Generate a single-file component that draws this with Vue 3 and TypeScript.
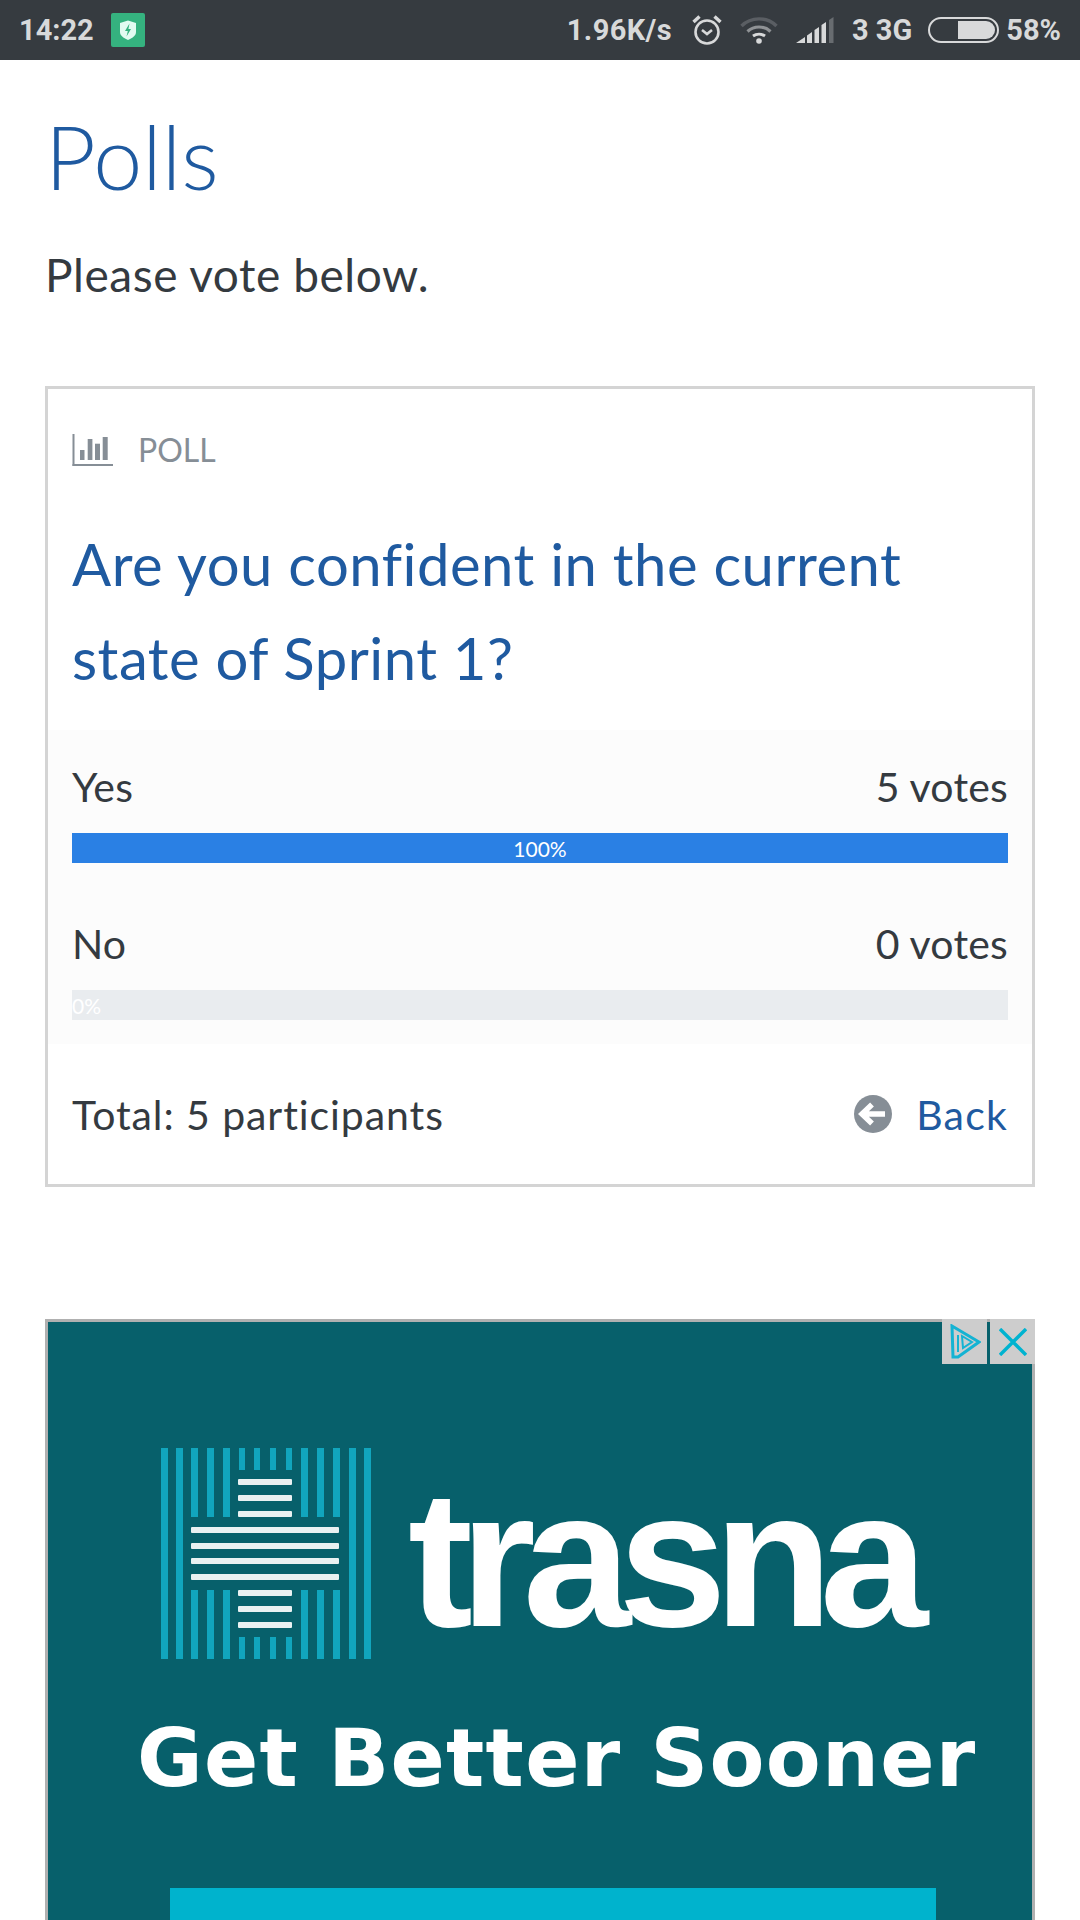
<script setup lang="ts">
interface Option {
  label: string
  votes: number
  percent: number
}

interface Stripe {
  x: number
  y: number
  w: number
  h: number
}

const options: Option[] = [
  { label: 'Yes', votes: 5, percent: 100 },
  { label: 'No', votes: 0, percent: 0 },
]

// logo stripes, coordinates are relative to the 211x211 logo box
const outerBars = [0, 15, 188, 203]
const sideBars = [30, 46, 62, 140, 156, 172]
const middleBars = [78, 93, 109, 125]

const blue: Stripe[] = [
  ...outerBars.map((x) => ({ x, y: 0, w: 7, h: 211 })),
  ...sideBars.flatMap((x) => [
    { x, y: 0, w: 7, h: 69 },
    { x, y: 142, w: 7, h: 69 },
  ]),
  ...middleBars.flatMap((x) => [
    { x, y: 0, w: 6, h: 22 },
    { x, y: 189, w: 6, h: 22 },
  ]),
]

const white: Stripe[] = [
  ...[31, 47, 63, 142, 158, 174].map((y) => ({ x: 77, y, w: 54, h: 6 })),
  ...[79, 95, 110, 126].map((y) => ({ x: 30, y, w: 148, h: 6 })),
]
</script>

<template>
  <div class="screen">
    <div class="status-bar">
      <div class="status-left">
        <span>14:22</span>
        <span class="shield-badge">
          <svg width="18" height="20" viewBox="0 0 18 20">
            <path d="M1 3 L9 0.5 L17 3 V12 C17 16 13 18 9 20 C5 18 1 16 1 12 Z" fill="#e2fbf1" />
            <path d="M10.5 3.5 L6 11 H8.8 L7.5 16.5 L12 9 H9.4 Z" fill="#35b27f" />
          </svg>
        </span>
      </div>
      <div class="status-right">
        <span class="speed">1.96K/s</span>
        <svg class="alarm" width="32" height="32" viewBox="0 0 32 32" fill="none" stroke="#d8d9da" stroke-width="2.6">
          <circle cx="16" cy="18" r="11.5" />
          <path d="M11 16 L16 20 L21 16" />
          <path d="M2.5 8 L8.5 2.5 M29.5 8 L23.5 2.5" stroke-width="3.4" />
        </svg>
        <svg class="wifi" width="38" height="28" viewBox="0 0 38 28" fill="none">
          <path d="M1.5 10 C11 0.5 27 0.5 36.5 10" stroke="#5a5e63" stroke-width="3.4" />
          <path d="M7.5 15.5 C14 9.5 24 9.5 30.5 15.5" stroke="#8f9295" stroke-width="3.2" />
          <path d="M13 20 C16.5 17.5 21.5 17.5 25 20" stroke="#d8d9da" stroke-width="3" />
          <circle cx="19" cy="25" r="2.8" fill="#d8d9da" />
        </svg>
        <svg class="signal" width="38" height="26" viewBox="0 0 38 26">
          <path d="M0 26 L9 20 V26 Z M11 18.5 L16 15 V26 H11 Z M18.5 13 V26 H23 V10 Z M25.5 8 V26 H30 V5 Z" fill="#d8d9da" />
          <path d="M33 3 L37.5 0 V26 H33 Z" fill="#686c70" />
        </svg>
        <span class="network">3 3G</span>
        <span class="battery"><span class="battery-level"></span></span>
        <span>58%</span>
      </div>
    </div>

    <main class="content">
      <h1>Polls</h1>
      <p class="subtitle">Please vote below.</p>

      <section class="poll-card">
        <div class="poll-head">
          <svg width="41" height="32" viewBox="0 0 41 32" fill="#868e96">
            <rect x="0.5" y="0" width="2" height="32" />
            <rect x="0.5" y="30" width="40.5" height="2" />
            <rect x="8" y="16" width="4.5" height="10" />
            <rect x="15.7" y="5" width="4.7" height="21" />
            <rect x="23" y="9.7" width="5" height="16.3" />
            <rect x="30.7" y="3" width="5" height="23" />
          </svg>
          <span>POLL</span>
        </div>
        <h2>Are you confident in the current state of Sprint 1?</h2>

        <div class="results">
          <div v-for="option in options" :key="option.label" class="result">
            <div class="result-row">
              <span>{{ option.label }}</span>
              <span>{{ option.votes }} votes</span>
            </div>
            <div class="bar">
              <div class="bar-fill" :style="{ width: option.percent + '%' }">{{ option.percent }}%</div>
            </div>
          </div>
        </div>

        <div class="poll-foot">
          <span class="total">Total: 5 participants</span>
          <a class="back">
            <svg width="38" height="38" viewBox="0 0 38 38">
              <circle cx="19" cy="19" r="19" fill="#868e96" />
              <path d="M8 19 H31 M18 9.5 L8 19 L18 28.5" fill="none" stroke="#fff" stroke-width="5.5" />
            </svg>
            <span class="back-label">Back</span>
          </a>
        </div>
      </section>

      <section class="ad">
        <div class="ad-controls">
          <span class="ad-button">
            <svg width="32" height="36" viewBox="0 0 32 36" fill="none" stroke="#14b3d3" stroke-width="3">
              <path d="M3 2 L30 18 L9 33 L4 33 Z" />
              <path d="M13 12 L23 18 L14 24 Z" stroke-width="2" />
              <path d="M9 11 V28" stroke-width="2" />
            </svg>
          </span>
          <span class="ad-button">
            <svg width="28" height="28" viewBox="0 0 28 28" stroke="#00b3d0" stroke-width="3.4">
              <path d="M1 1 L27 27 M27 1 L1 27" />
            </svg>
          </span>
        </div>

        <div class="ad-brand">
          <svg class="ad-logo" width="211" height="211" viewBox="0 0 211 211">
            <rect v-for="(s, i) in blue" :key="'b' + i" :x="s.x" :y="s.y" :width="s.w" :height="s.h" fill="#11a5bd" />
            <rect v-for="(s, i) in white" :key="'w' + i" :x="s.x" :y="s.y" :width="s.w" :height="s.h" rx="1" fill="#e9f1f2" />
          </svg>
          <span class="ad-name">trasna</span>
        </div>
        <div class="ad-tagline">Get Better Sooner</div>
        <div class="ad-cta"></div>
      </section>
    </main>
  </div>
</template>

<style>
body {
  margin: 0;
  background: #fff;
}
</style>

<style scoped>
.screen {
  width: 1080px;
  height: 1920px;
  overflow: hidden;
  background: #fff;
  font-family: Lato, "Noto Sans", sans-serif;
  color: #343a40;
}

.status-bar {
  height: 60px;
  box-sizing: border-box;
  padding: 0 19px;
  display: flex;
  align-items: center;
  justify-content: space-between;
  background: #363b40;
  color: #d8d9da;
  font-family: Roboto, sans-serif;
  font-size: 29px;
  font-weight: 700;
}

.status-left {
  display: flex;
  align-items: center;
  gap: 17px;
}

.shield-badge {
  width: 34px;
  height: 34px;
  border-radius: 2px;
  background: #35b27f;
  display: flex;
  align-items: center;
  justify-content: center;
}

.status-right {
  display: flex;
  align-items: center;
}

.speed {
  letter-spacing: 0.4px;
}

.alarm {
  margin-left: 19px;
}

.wifi {
  margin-left: 17px;
}

.signal {
  margin-left: 18px;
}

.network {
  margin-left: 18px;
}

.battery {
  width: 71px;
  height: 26px;
  box-sizing: border-box;
  margin-left: 16px;
  margin-right: 7px;
  padding: 2px;
  border: 2px solid #d8d9da;
  border-radius: 13px;
  display: flex;
  justify-content: flex-end;
}

.battery-level {
  width: 37px;
  background: #d8d9da;
  border-radius: 0 10px 10px 0;
}

.content {
  padding: 36px 45px 0;
}

h1 {
  margin: 0;
  font-size: 88px;
  line-height: 120px;
  font-weight: 300;
  color: #1f5aa0;
}

.subtitle {
  margin: 29px 0 0;
  font-size: 46px;
  line-height: 60px;
  letter-spacing: 0.55px;
}

.poll-card {
  margin-top: 81px;
  border: 3px solid #d4d4d4;
}

.poll-head {
  padding: 41px 24px 0;
  height: 40px;
  display: flex;
  align-items: center;
  gap: 25px;
  font-size: 32px;
  line-height: 40px;
  color: #868e96;
}

h2 {
  margin: 47px 0 0;
  padding: 0 24px;
  font-size: 58px;
  line-height: 94px;
  font-weight: 400;
  letter-spacing: 0.5px;
  color: #1f5aa0;
}

.results {
  margin-top: 25px;
  padding: 32px 24px 24px;
  background: #fcfcfc;
}

.result + .result {
  margin-top: 56px;
}

.result-row {
  display: flex;
  justify-content: space-between;
  font-size: 41px;
  line-height: 50px;
  letter-spacing: 0.2px;
}

.bar {
  margin-top: 21px;
  height: 30px;
  background: #e9ecef;
}

.bar-fill {
  height: 100%;
  background: #2a80e4;
  color: #fff;
  font-size: 21px;
  line-height: 31px;
  text-align: center;
}

.poll-foot {
  height: 140px;
  padding: 0 24px;
  display: flex;
  align-items: center;
  justify-content: space-between;
  font-size: 41px;
}

.total {
  letter-spacing: 0.92px;
}

.back {
  display: flex;
  align-items: center;
  gap: 24px;
  color: #1f5aa0;
}

.back-label {
  letter-spacing: 1.2px;
}

.ad {
  position: relative;
  margin-top: 132px;
  height: 620px;
  box-sizing: border-box;
  padding: 126px 0 0 113px;
  border: 3px solid #b0b0b0;
  border-bottom: none;
  background: #07606b;
}

.ad-controls {
  position: absolute;
  top: -3px;
  right: -3px;
  display: flex;
  gap: 3px;
}

.ad-button {
  width: 45px;
  height: 45px;
  background: #cdcdcd;
  display: flex;
  align-items: center;
  justify-content: center;
}

.ad-brand {
  display: flex;
  align-items: center;
  gap: 36px;
  height: 211px;
}

.ad-logo {
  flex: none;
}

.ad-name {
  padding-top: 9px;
  font-family: "Liberation Sans", sans-serif;
  font-size: 195px;
  font-weight: 700;
  letter-spacing: -13px;
  line-height: 211px;
  color: #fff;
}

.ad-tagline {
  margin: 50px 0 0 -24px;
  font-family: "DejaVu Sans", sans-serif;
  font-size: 80px;
  font-weight: 700;
  letter-spacing: 1.3px;
  line-height: 100px;
  color: #fff;
  white-space: nowrap;
}

.ad-cta {
  margin: 79px 0 0 9px;
  width: 766px;
  height: 100px;
  background: #00b3cd;
}
</style>
